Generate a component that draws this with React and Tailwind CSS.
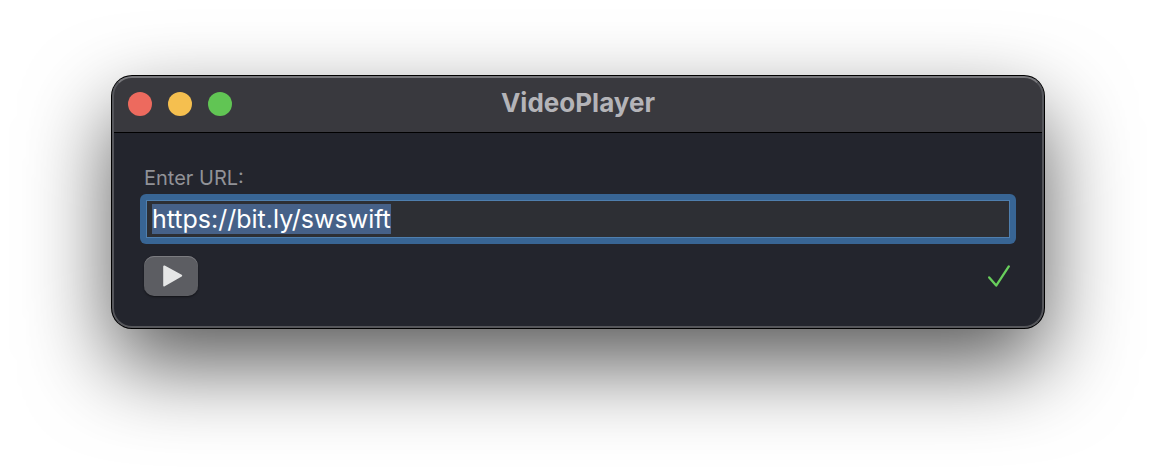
import { useEffect, useRef, useState } from "react";

function TitleBar({ title }) {
  return (
    <header className="grid h-14 grid-cols-[1fr_auto_1fr] items-center bg-[#39393e] px-4">
      <div className="flex gap-4">
        <button type="button" aria-label="Close" className="size-6 rounded-full bg-[#ed6a5e]" />
        <button type="button" aria-label="Minimize" className="size-6 rounded-full bg-[#f5bf4f]" />
        <button type="button" aria-label="Zoom" className="size-6 rounded-full bg-[#61c554]" />
      </div>
      <h1 className="pb-0.5 text-[26px] leading-8 font-bold text-[#b4b4b8]">{title}</h1>
    </header>
  );
}

function PlayIcon() {
  return (
    <svg viewBox="0 0 20 22" className="h-[22px] w-5" aria-hidden="true">
      <path
        d="M1.2 1.4 L18.2 10.6 L1.2 20.4 Z"
        fill="#e5e6e6"
        stroke="#e5e6e6"
        strokeWidth="2"
        strokeLinejoin="round"
      />
    </svg>
  );
}

function CheckIcon() {
  return (
    <svg viewBox="0 0 24 24" className="size-6" role="img" aria-label="Valid URL">
      <path
        d="M1.2 13.4 L8.2 21.6 L20.8 2.4"
        fill="none"
        stroke="#68ce5c"
        strokeWidth="2.3"
        strokeLinecap="round"
        strokeLinejoin="round"
      />
    </svg>
  );
}

export default function App() {
  const [url, setUrl] = useState("https://bit.ly/swswift");
  const field = useRef(null);

  useEffect(() => {
    field.current.focus();
    field.current.select();
  }, []);

  return (
    <div className="min-h-screen overflow-hidden bg-white px-28 pt-[76px] pb-36 font-['Inter','Liberation_Sans',sans-serif]">
      <main className="relative overflow-hidden rounded-[20px] bg-[#23252d] shadow-[0_0_0_1px_#000,0_36px_86px_rgba(0,0,0,0.66)] after:pointer-events-none after:absolute after:inset-0 after:rounded-[20px] after:border-2 after:border-t-[#77777b] after:border-x-[#55565b] after:border-b-[#56575b]">
        <TitleBar title="VideoPlayer" />
        <form
          onSubmit={(e) => e.preventDefault()}
          className="border-t border-black px-7 pt-[33px] pb-8"
        >
          <label htmlFor="url" className="block pl-1 text-xl leading-6 text-[#919297]">
            Enter URL:
          </label>
          <div className="mt-1 rounded-md bg-[#386594] p-1.5">
            <input
              id="url"
              ref={field}
              type="text"
              spellCheck={false}
              value={url}
              onChange={(e) => setUrl(e.target.value)}
              className="block h-[38px] w-full border border-[#4f7fae] bg-[#2d2f34] px-[5px] text-[25px] leading-8 text-white outline-none selection:bg-[#47628a]/99 selection:text-white"
            />
          </div>
          <div className="mt-3 flex items-center justify-between px-1">
            <button
              type="submit"
              aria-label="Play"
              className="flex h-10 w-[54px] items-center justify-center rounded-[10px] bg-[#5c5d62] pl-1 shadow-[inset_0_1px_0_#7b7c80,0_1px_2px_rgba(0,0,0,0.5)]"
            >
              <PlayIcon />
            </button>
            <CheckIcon />
          </div>
        </form>
      </main>
    </div>
  );
}
